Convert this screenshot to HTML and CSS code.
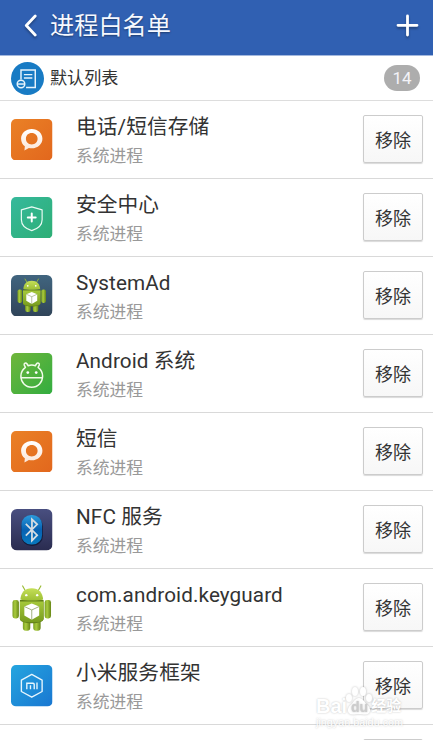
FILE: index.html
```html
<!DOCTYPE html>
<html lang="zh-CN">

<head>
  <meta charset="UTF-8" />
  <meta name="viewport" content="width=device-width, initial-scale=1.0" />
  <title>进程白名单</title>
  <link rel="stylesheet" href="styles.css">
</head>

<body>
  <svg class="defs" width="0" height="0">
    <defs>
      <linearGradient id="orange" x2="1" y2="1"><stop stop-color="#ea8126" /><stop offset="1" stop-color="#e2671d" /></linearGradient>
      <linearGradient id="teal" x2="1" y2="1"><stop stop-color="#36b99c" /><stop offset="1" stop-color="#2dae75" /></linearGradient>
      <linearGradient id="green" x2="1" y2="1"><stop stop-color="#70b63b" /><stop offset="1" stop-color="#32ad40" /></linearGradient>
      <linearGradient id="slate" x2="0" y2="1"><stop stop-color="#41657f" /><stop offset="1" stop-color="#304459" /></linearGradient>
      <linearGradient id="navy" x2="0" y2="1"><stop stop-color="#494f80" /><stop offset="1" stop-color="#2a2c50" /></linearGradient>
      <linearGradient id="blue" x2="1" y2="1"><stop stop-color="#25a5df" /><stop offset="1" stop-color="#1977d1" /></linearGradient>
      <linearGradient id="oval" x2="0" y2="1"><stop stop-color="#2b9bdc" /><stop offset=".5" stop-color="#0861b2" /><stop offset="1" stop-color="#087abf" /></linearGradient>
      <linearGradient id="bubble" x2="0" y2="1"><stop stop-color="#fff" /><stop offset="1" stop-color="#fbe6d8" /></linearGradient>
      <linearGradient id="limb" x2="1" y2="0"><stop stop-color="#7b9f22" /><stop offset=".4" stop-color="#a9cb3e" /><stop offset="1" stop-color="#668616" /></linearGradient>
      <linearGradient id="body" x2="0" y2="1"><stop stop-color="#a5c83a" /><stop offset="1" stop-color="#789c1f" /></linearGradient>
      <linearGradient id="head" x2="0" y2="1"><stop stop-color="#c5df58" /><stop offset="1" stop-color="#9dbf35" /></linearGradient>
    </defs>
    <symbol id="icon-sms" viewBox="0 0 42 42">
      <rect width="42" height="42" rx="5" fill="url(#orange)" />
      <path fill="url(#bubble)" fill-rule="evenodd" d="M21 10.200c-6.200 0-10.800 4.300-10.800 9.800 0 3.400 1.500 6 3.800 7.700l-.4 4.200 4.500-2.600c1 .3 1.900.4 2.900.4 6.200 0 10.800-4.300 10.800-9.700s-4.600-9.800-10.800-9.800zM21 14.200c3.500 0 5.900 2.500 5.900 5.700s-2.400 5.800-5.900 5.800-5.900-2.500-5.900-5.800 2.400-5.700 5.900-5.700z" />
    </symbol>
    <symbol id="icon-shield" viewBox="0 0 42 42">
      <rect width="42" height="42" rx="5" fill="url(#teal)" />
      <path fill="none" stroke="#e9faf3" stroke-width="1.200" stroke-linejoin="round" d="M21 10l10.500 3v10c0 5.500-5 9.300-10.500 11-5.500-1.700-10.500-5.500-10.500-11V13z" />
      <path stroke="#fff" stroke-width="2" stroke-linecap="round" d="M21 16.700v8M17 20.700h8" />
    </symbol>
    <symbol id="robot" viewBox="0 0 42 48">
      <path stroke="#9cbd38" stroke-width="1.200" stroke-linecap="round" d="M14.500 6.500l-2.700-4.800M27.500 6.500l2.700-4.800" />
      <rect x="12" y="35" width="7.500" height="12" rx="3" fill="url(#limb)" />
      <rect x="22.500" y="35" width="7.500" height="12" rx="3" fill="url(#limb)" />
      <rect x="1.500" y="16" width="6.500" height="18.500" rx="2.500" fill="url(#limb)" />
      <rect x="34" y="16" width="6.500" height="18.500" rx="2.500" fill="url(#limb)" />
      <path fill="#607d18" d="M9 16h24v19c0 3-5 4.500-12 4.500S9 38 9 35z" />
      <path fill="url(#body)" d="M9 17.500h24v17c0 2.800-5 4-12 4s-12-1.200-12-4z" />
      <path fill="url(#head)" d="M9.500 15.500C9.800 8.500 14 4 21 4s11.200 4.500 11.500 11.500c-4 1.300-19 1.300-23 0z" />
      <circle cx="15.500" cy="11" r="1.200" fill="#fff" />
      <circle cx="26.500" cy="11" r="1.200" fill="#fff" />
      <path fill="#fff" d="M21 19.500l7.500 3v9L21 36l-7.500-4.500v-9z" />
      <path fill="none" stroke="#8b9d61" stroke-width=".8" d="M13.500 22.500l7.500 3.500 7.500-3.500M21 26v10" />
    </symbol>
    <symbol id="icon-robot-tile" viewBox="0 0 42 42">
      <rect width="42" height="42" rx="6" fill="url(#slate)" />
      <use href="#robot" x="5.500" y="2" width="31" height="37" />
    </symbol>
    <symbol id="icon-system" viewBox="0 0 42 42">
      <rect width="42" height="42" rx="5" fill="url(#green)" />
      <g fill="none" stroke="#f1fbe9" stroke-width="1.500" stroke-linejoin="round" stroke-linecap="round">
        <path d="M14.600 14.600l-1.200-2.300c-.7-1.700 1.600-3 2.700-1.400l1.300 2c2.200-.8 5-.8 7.200 0l1.300-2c1.100-1.600 3.400-.3 2.700 1.400l-1.200 2.300c2.800 2.200 4.600 5.300 4.600 8.800 0 6.200-4.600 11.300-11 11.300s-11-5.100-11-11.300c0-3.500 1.800-6.600 4.600-8.800z" />
        <path d="M10.300 25h21.400" />
      </g>
      <circle cx="17" cy="19.800" r="1.400" fill="#fff" />
      <circle cx="25.500" cy="19.800" r="1.400" fill="#fff" />
    </symbol>
    <symbol id="icon-nfc" viewBox="0 0 42 42">
      <rect width="42" height="42" rx="6" fill="url(#navy)" />
      <rect x="10.300" y="7" width="22" height="30.500" rx="10.500" fill="#171c3b" />
      <rect x="10.500" y="6" width="21" height="30" rx="10" fill="url(#oval)" />
      <path fill="none" stroke="#d5dde3" stroke-width="1.800" d="M15 15l11.500 11.500-5.300 5.500V10.500l5.300 5L15 27" />
    </symbol>
    <symbol id="icon-mi" viewBox="0 0 42 42">
      <rect width="42" height="42" rx="5" fill="url(#blue)" />
      <path fill="none" stroke="#e6f5fd" stroke-width="1.400" stroke-linejoin="round" d="M21 9.500l10.500 5.800v11.500L21 32.600l-10.500-5.800V15.300z" />
      <path fill="none" stroke="#e6f5fd" stroke-width="1.400" d="M16 24.500v-6h6.300q1.200 0 1.200 1.200v4.800M19.700 20.500v4M26.300 17.800v6.700" />
    </symbol>
  </svg>

  <header class="top-bar">
    <button class="back-button" aria-label="返回">
      <svg width="16" height="26" viewBox="0 0 16 26"><path d="M12.200 3L3.300 12.500l8.900 9.500" /></svg>
    </button>
    <h1>进程白名单</h1>
    <button class="add-button" aria-label="添加">
      <svg width="24" height="26" viewBox="0 0 24 26"><path d="M11.500 3v19M2 12.300h19" /></svg>
    </button>
  </header>

  <div class="list-header">
    <svg class="list-icon" viewBox="0 0 34 34">
      <circle cx="17" cy="17" r="17" fill="#187bc4" />
      <g fill="none" stroke="#e7f4fc" stroke-width="1.500">
        <path d="M10.300 18V8.300H25v18H15.500M13.300 13H22M13.300 16.500H22" />
        <circle cx="10.300" cy="22.700" r="3.900" />
        <path d="M6.500 22.700h7.600" />
      </g>
    </svg>
    <h2>默认列表</h2>
    <span class="count">14</span>
  </div>

  <ul class="process-list">
    <li class="process">
      <svg class="process-icon"><use href="#icon-sms" /></svg>
      <div class="process-text"><h3>电话/短信存储</h3><p>系统进程</p></div>
      <button class="remove-button">移除</button>
    </li>
    <li class="process">
      <svg class="process-icon"><use href="#icon-shield" /></svg>
      <div class="process-text"><h3>安全中心</h3><p>系统进程</p></div>
      <button class="remove-button">移除</button>
    </li>
    <li class="process">
      <svg class="process-icon"><use href="#icon-robot-tile" /></svg>
      <div class="process-text"><h3>SystemAd</h3><p>系统进程</p></div>
      <button class="remove-button">移除</button>
    </li>
    <li class="process">
      <svg class="process-icon"><use href="#icon-system" /></svg>
      <div class="process-text"><h3>Android 系统</h3><p>系统进程</p></div>
      <button class="remove-button">移除</button>
    </li>
    <li class="process">
      <svg class="process-icon"><use href="#icon-sms" /></svg>
      <div class="process-text"><h3>短信</h3><p>系统进程</p></div>
      <button class="remove-button">移除</button>
    </li>
    <li class="process">
      <svg class="process-icon"><use href="#icon-nfc" /></svg>
      <div class="process-text"><h3>NFC 服务</h3><p>系统进程</p></div>
      <button class="remove-button">移除</button>
    </li>
    <li class="process">
      <svg class="process-icon robot-icon"><use href="#robot" /></svg>
      <div class="process-text"><h3>com.android.keyguard</h3><p>系统进程</p></div>
      <button class="remove-button">移除</button>
    </li>
    <li class="process">
      <svg class="process-icon"><use href="#icon-mi" /></svg>
      <div class="process-text"><h3>小米服务框架</h3><p>系统进程</p></div>
      <button class="remove-button">移除</button>
    </li>
    <li class="process process-peek">
      <button class="remove-button" aria-label="移除"></button>
    </li>
  </ul>

  <div class="watermark">
    <div class="watermark-logo">
      <span>Bai</span>
      <svg width="28" height="30" viewBox="0 0 28 30">
        <ellipse cx="4" cy="12" rx="3" ry="4" />
        <ellipse cx="10" cy="5.500" rx="3" ry="4.500" />
        <ellipse cx="18" cy="5.500" rx="3" ry="4.500" />
        <ellipse cx="24" cy="12" rx="3" ry="4" />
        <path d="M14 12c4 0 5 4 8 6.500 5 4 3.500 10-1.500 10-3 0-4-.5-6.500-.5s-3.500.5-6.500.5c-5 0-6.500-6-1.500-10C9 16 10 12 14 12z" />
        <text x="6" y="26">du</text>
      </svg>
      <span class="watermark-name">经验</span>
    </div>
    <div class="watermark-url">jingyan.baidu.com</div>
  </div>
</body>

</html>
```

FILE: styles.css
```css
* {
  box-sizing: border-box;
}

body {
  font-family: Roboto, "Noto Sans CJK SC", sans-serif;
  background: #fff;
  color: #333;
  margin: 0;
  height: 740px;
  overflow: hidden;
}

h1,
h2,
h3,
p {
  font-weight: normal;
  margin: 0;
}

button {
  font-family: inherit;
  padding: 0;
  border: none;
  cursor: pointer;
}

.defs {
  position: absolute;
}

.top-bar {
  display: flex;
  align-items: center;
  height: 56px;
  padding: 0 13px 3px 23px;
  background: #3060b2;
  border-bottom: 1px solid #a3b8de;
  color: #f5f8ff;
}

.top-bar h1 {
  flex: 1;
  margin-left: 11px;
  font-size: 24.2px;
  line-height: 36px;
  text-shadow: 0 1px 2px rgba(0, 0, 0, 0.4);
}

.back-button,
.add-button {
  display: flex;
  background: none;
}

.top-bar svg {
  fill: none;
  stroke: #fff;
  stroke-width: 2.8;
  stroke-linecap: round;
  stroke-linejoin: round;
  filter: drop-shadow(0 2px 1px rgba(0, 0, 0, 0.3));
}

.list-header {
  display: flex;
  align-items: center;
  height: 45px;
  padding: 0 13px 0 11px;
  border-bottom: 1px solid #ddd;
}

.list-icon {
  width: 33px;
  height: 33px;
}

.list-header h2 {
  flex: 1;
  margin-left: 6px;
  font-size: 17.1px;
  line-height: 26px;
}

.count {
  width: 36px;
  height: 26px;
  border-radius: 13px;
  background: #adadad;
  color: #f3f3f8;
  font-size: 17px;
  line-height: 27px;
  text-align: center;
}

.process-list {
  list-style: none;
  margin: 0;
  padding: 0;
}

.process {
  display: flex;
  align-items: center;
  justify-content: flex-end;
  height: 78.05px;
  padding: 0 10px 0 11px;
  border-bottom: 1px solid #d9d9d9;
}

.process-icon {
  width: 41.5px;
  height: 41.5px;
}

.robot-icon {
  height: 48px;
}

.process-text {
  flex: 1;
  margin-left: 23.5px;
  padding-top: 3px;
}

.process-text h3 {
  font-size: 20.7px;
  letter-spacing: 0.1px;
  line-height: 30px;
}

.process-text p {
  color: #999;
  font-size: 16.8px;
  line-height: 28px;
}

.remove-button {
  width: 60px;
  height: 48px;
  margin-bottom: 2px;
  border: 1px solid #ccc;
  border-radius: 2px;
  background: linear-gradient(#fff, #f7f7f7);
  box-shadow: 0 1px 1px rgba(0, 0, 0, 0.15);
  color: #333;
  font-size: 18px;
}

.process-peek {
  align-items: flex-start;
  height: 15px;
  padding-top: 13.5px;
  border-bottom: none;
  overflow: hidden;
}

/* sits over the last rows */
.watermark {
  position: absolute;
  left: 316px;
  top: 687px;
  color: #fff;
  font-family: "Liberation Sans", "Noto Sans CJK SC", sans-serif;
  text-shadow: 0 0 2px rgba(0, 0, 0, 0.25);
}

.watermark-logo {
  display: flex;
  align-items: flex-end;
  height: 29px;
  font-size: 20px;
  font-weight: bold;
  line-height: 20px;
}

.watermark-logo svg {
  margin: 0 -2px;
  fill: #fff;
  filter: drop-shadow(0 0 1px rgba(0, 0, 0, 0.25));
}

.watermark-logo text {
  fill: #ccc;
  font-size: 14px;
}

.watermark-name {
  font-size: 15px;
}

.watermark-url {
  font-size: 10.8px;
  line-height: 13px;
}
```
